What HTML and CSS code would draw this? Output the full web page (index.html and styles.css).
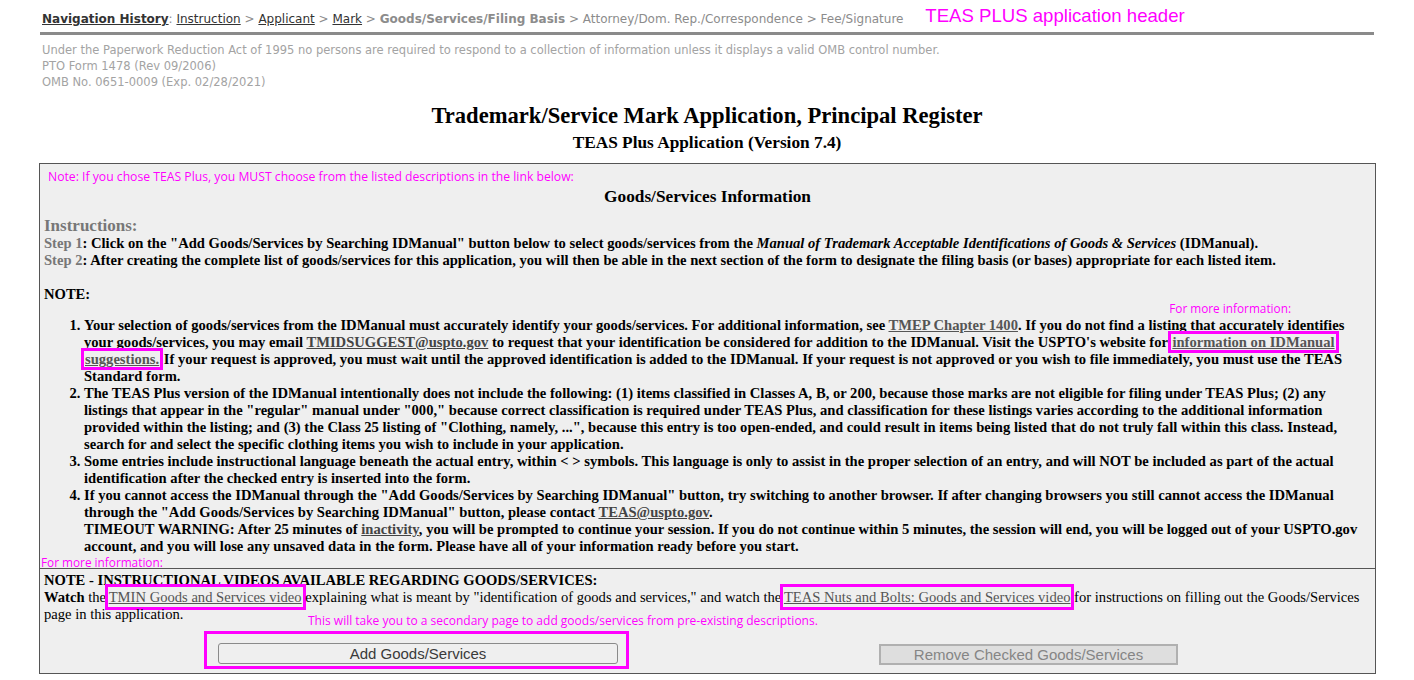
FILE: index.html
```html
<!DOCTYPE html>
<html>
<head>
<meta charset="utf-8">
<link rel="stylesheet" href="styles.css">
</head>
<body>
<div class="page">
  <div class="nav">
    <b class="nav-title">Navigation History</b>: <span class="nav-link">Instruction</span> &gt; <span class="nav-link">Applicant</span> &gt; <span class="nav-link">Mark</span> &gt; <b class="nav-current">Goods/Services/Filing Basis</b> &gt; Attorney/Dom. Rep./Correspondence &gt; Fee/Signature
    <span class="anno-header">TEAS PLUS application header</span>
  </div>
  <div class="rule"></div>
  <div class="omb">
    Under the Paperwork Reduction Act of 1995 no persons are required to respond to a collection of information unless it displays a valid OMB control number.<br>
    PTO Form 1478 (Rev 09/2006)<br>
    OMB No. 0651-0009 (Exp. 02/28/2021)
  </div>
  <h1 class="title">Trademark/Service Mark Application, Principal Register</h1>
  <h2 class="subtitle">TEAS Plus Application (Version 7.4)</h2>

  <div class="box">
    <div class="sec1">
      <div class="anno anno-note">Note: If you chose TEAS Plus, you MUST choose from the listed descriptions in the link below:</div>
      <h3 class="sec-title">Goods/Services Information</h3>
      <div class="instr-title">Instructions:</div>
      <div class="step"><span class="step-num">Step 1</span>: Click on the "Add Goods/Services by Searching IDManual" button below to select goods/services from the <i>Manual of Trademark Acceptable Identifications of Goods &amp; Services</i> (IDManual).</div>
      <div class="step"><span class="step-num">Step 2</span>: After creating the complete list of goods/services for this application, you will then be able in the next section of the form to designate the filing basis (or bases) appropriate for each listed item.</div>
      <div class="note-label">NOTE:</div>
      <div class="anno anno-more-right">For more information:</div>
      <ol class="notes">
        <li>Your selection of goods/services from the IDManual must accurately identify your goods/services. For additional information, see <span class="link">TMEP Chapter 1400</span>. If you do not find a listing that accurately identifies your goods/services, you may email <span class="link link-dark">TMIDSUGGEST@uspto.gov</span> to request that your identification be considered for addition to the IDManual. Visit the USPTO's website for <span class="hl hl-tight"><span class="link">information on IDManual suggestions.</span></span> If your request is approved, you must wait until the approved identification is added to the IDManual. If your request is not approved or you wish to file immediately, you must use the TEAS Standard form.</li>
        <li>The TEAS Plus version of the IDManual intentionally does not include the following: (1) items classified in Classes A, B, or 200, because those marks are not eligible for filing under TEAS Plus; (2) any listings that appear in the "regular" manual under "000," because correct classification is required under TEAS Plus, and classification for these listings varies according to the additional information provided within the listing; and (3) the Class 25 listing of "Clothing, namely, ...", because this entry is too open-ended, and could result in items being listed that do not truly fall within this class. Instead, search for and select the specific clothing items you wish to include in your application.</li>
        <li>Some entries include instructional language beneath the actual entry, within &lt; &gt; symbols. This language is only to assist in the proper selection of an entry, and will NOT be included as part of the actual identification after the checked entry is inserted into the form.</li>
        <li>If you cannot access the IDManual through the "Add Goods/Services by Searching IDManual" button, try switching to another browser. If after changing browsers you still cannot access the IDManual through the "Add Goods/Services by Searching IDManual" button, please contact <span class="link link-dark">TEAS@uspto.gov</span>.<br>TIMEOUT WARNING: After 25 minutes of <span class="link link-dark">inactivity</span>, you will be prompted to continue your session. If you do not continue within 5 minutes, the session will end, you will be logged out of your USPTO.gov account, and you will lose any unsaved data in the form. Please have all of your information ready before you start.</li>
      </ol>
      <div class="anno anno-more-left">For more information:</div>
    </div>
    <div class="sec2">
      <div class="videos-title">NOTE - INSTRUCTIONAL VIDEOS AVAILABLE REGARDING GOODS/SERVICES:</div>
      <div class="videos-text"><b>Watch</b> the <span class="hl hl-loose"><span class="link">TMIN Goods and Services video</span></span> explaining what is meant by "identification of goods and services," and watch the <span class="hl hl-loose"><span class="link">TEAS Nuts and Bolts: Goods and Services video</span></span> for instructions on filling out the Goods/Services page in this application.</div>
      <div class="anno anno-secondary">This will take you to a secondary page to add goods/services from pre-existing descriptions.</div>
      <div class="buttons">
        <div class="btn-frame"><button class="btn btn-add" type="button">Add Goods/Services</button></div>
        <button class="btn btn-remove" type="button" disabled>Remove Checked Goods/Services</button>
      </div>
    </div>
  </div>
</div>
</body>
</html>
```
FILE: styles.css
```css
html, body {
  margin: 0;
  padding: 0;
  background: #fff;
}
.page {
  padding: 0 40px;
}
.nav {
  font-family: "DejaVu Sans", Verdana, sans-serif;
  font-size: 12px;
  color: #8c8c8c;
  padding-top: 8px;
  height: 22px;
  line-height: 16px;
  padding-left: 2px;
  white-space: nowrap;
}
.nav-title {
  color: #333;
  text-decoration: underline;
}
.nav-link {
  color: #333;
  text-decoration: underline;
}
.nav-current {
  color: #8c8c8c;
}
.anno-header {
  font-family: "Liberation Sans", Arial, sans-serif;
  font-size: 18.6px;
  color: #ff00ff;
  margin-left: 18px;
  vertical-align: 1px;
}
.rule {
  height: 3px;
  background: #8a8a8a;
  margin-top: 2px;
}
.omb {
  font-family: "DejaVu Sans", Verdana, sans-serif;
  font-size: 11.5px;
  line-height: 16px;
  color: #a3a3a3;
  margin-top: 7px;
  padding-left: 2px;
}
.title {
  font-family: "Liberation Serif", "Times New Roman", serif;
  font-weight: bold;
  font-size: 22.6px;
  text-align: center;
  margin: 13px 0 0 0;
  line-height: 26px;
}
.subtitle {
  font-family: "Liberation Serif", "Times New Roman", serif;
  font-weight: bold;
  font-size: 17.3px;
  text-align: center;
  margin: 4px 0 0 0;
  line-height: 20px;
}
.box {
  margin-top: 10px;
  background: #efefef;
  border: 1px solid #555;
  font-family: "Liberation Serif", "Times New Roman", serif;
  color: #000;
  margin-left: -1px;
  margin-right: -2px;
}
.sec1 {
  padding: 6px 4px 0 4px;
  border-bottom: 1px solid #555;
}
.anno {
  font-family: "Open Sans", sans-serif;
  color: #ff00ff;
  font-size: 11.8px;
  line-height: 14px;
}
.anno-note {
  padding-left: 4px;
  font-size: 12.2px;
}
.sec-title {
  font-size: 17.3px;
  font-weight: bold;
  text-align: center;
  margin: 3px 0 0 0;
  line-height: 20px;
}
.instr-title {
  font-size: 17px;
  font-weight: bold;
  color: #777;
  margin-top: 9px;
  line-height: 19px;
}
.step {
  font-size: 14.6px;
  font-weight: bold;
  line-height: 17px;
}
.step-num {
  color: #777;
}
.note-label {
  font-size: 14.6px;
  font-weight: bold;
  margin-top: 17px;
  line-height: 17px;
}
.anno-more-right {
  text-align: right;
  padding-right: 80px;
  margin-top: -2px;
}
.notes {
  margin: 2px 0 0 0;
  padding-left: 40px;
  padding-right: 8px;
  font-size: 14.6px;
  font-weight: bold;
  line-height: 17px;
}
.link {
  color: #555;
  text-decoration: underline;
}
.link-dark {
  color: #444;
}
.hl {
  border: 3px solid #ff00ff;
  -webkit-box-decoration-break: clone;
  box-decoration-break: clone;
}
.hl-tight {
  padding: 0 1px;
  margin: 0 -3px;
}
.hl-loose {
  padding: 2px 1px;
  margin: 0 -4px 0 -5px;
}
.anno-more-left {
  margin-left: -3px;
  line-height: 12px;
  margin-top: 1px;
}
.sec2 {
  padding: 3px 4px 4px 4px;
}
.videos-title {
  font-size: 14.6px;
  font-weight: bold;
  line-height: 17px;
}
.videos-text {
  font-size: 14.6px;
  line-height: 17px;
}
.anno-secondary {
  font-size: 12px;
  margin-left: 264px;
  margin-top: -10px;
  line-height: 16px;
}
.buttons {
  display: flex;
  align-items: center;
  margin-top: 2px;
  padding-left: 160px;
}
.btn-frame {
  border: 3px solid #ff00ff;
  padding: 9px 8px 2px 11px;
}
.btn {
  font-family: "Liberation Sans", Arial, sans-serif;
  font-size: 15px;
  height: 21px;
  padding: 0;
  border-radius: 3px;
}
.btn-add {
  width: 400px;
  background: #efefef;
  border: 1px solid #8a8a8a;
  color: #3a3a3a;
}
.btn-remove {
  width: 299px;
  margin-left: 250px;
  margin-top: 8px;
  background: #dedede;
  border: 2px solid #b0b0b0;
  border-radius: 0;
  color: #858585;
}
```
